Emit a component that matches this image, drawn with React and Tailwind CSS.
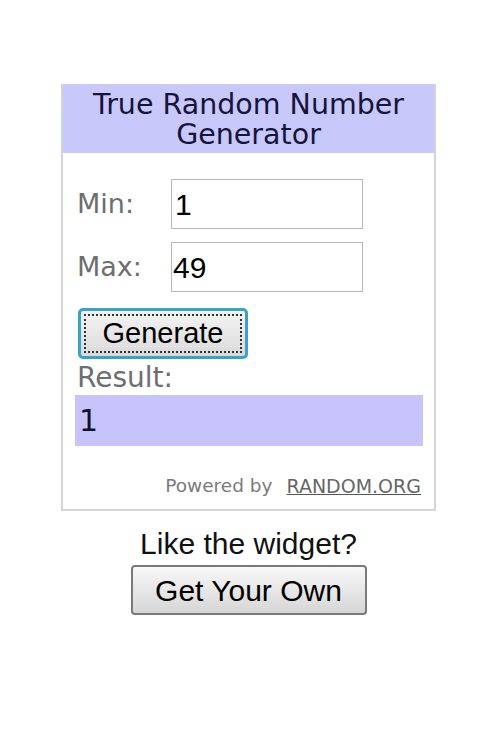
export default function App() {
  return (
    <div className="w-[503px] h-[750px] bg-white pt-[84px]">
      <div className="w-[375px] ml-[61px] flex flex-col items-center">
        <div className="w-[375px] border-2 border-[#d4d4dc] border-t-0 bg-white flex flex-col">
          <div className="bg-[#c8c8fb] h-[69px] flex flex-col items-center pt-[6px] text-[#14143c] text-[28.5px] leading-[30px] font-['DejaVu_Sans',sans-serif]">
            <div>True Random Number</div>
            <div>Generator</div>
          </div>
          <div className="flex flex-col pl-[14px] pr-[10px] pt-[26px] font-['DejaVu_Sans',sans-serif]">
            <div className="flex items-center h-[50px]">
              <span className="w-[94px] text-[27px] text-[#6e6e6e] leading-[32px]">Min:</span>
              <div className="w-[192px] h-[50px] border border-[#b8b8b8] bg-white flex items-center pl-[3px] text-[30px] text-black font-['Liberation_Sans',sans-serif]">1</div>
            </div>
            <div className="flex items-center h-[50px] mt-[13px]">
              <span className="w-[94px] text-[27px] text-[#6e6e6e] leading-[32px]">Max:</span>
              <div className="w-[192px] h-[50px] border border-[#b8b8b8] bg-white flex items-center pl-[1px] text-[30px] text-black font-['Liberation_Sans',sans-serif]">49</div>
            </div>
            <div className="mt-[16px]">
              <div className="w-[170px] h-[51px] ml-[1px] rounded-[5px] border-[3px] border-[#3aa2c8] bg-gradient-to-b from-[#f4f4f4] to-[#dadada] p-[3px]">
                <div className="w-full h-full border-2 border-dotted border-[#333] flex items-center justify-center text-[29px] text-black font-['Liberation_Sans',sans-serif]">Generate</div>
              </div>
            </div>
            <div className="text-[28px] text-[#6e6e6e] leading-[28px] mt-[5px]">Result:</div>
            <div className="h-[51px] bg-[#c6c4fa] flex items-center pl-[4px] mt-[3px] ml-[-2px] mr-[1px] text-[30px] text-[#101030]">1</div>
            <div className="flex justify-end items-center mt-[29px] mb-[12px] mr-[3px] leading-[22px] text-[#7a7a7a] gap-[14px]">
              <span className="text-[18.5px]">Powered by</span>
              <span className="text-[19px] underline decoration-[#555] text-[#666]">RANDOM.ORG</span>
            </div>
          </div>
        </div>
        <div className="mt-[16px] text-[30px] text-[#111] font-['Liberation_Sans',sans-serif] leading-[34px]">Like the widget?</div>
        <div className="mt-[4px] w-[236px] h-[50px] rounded-[4px] border-2 border-[#7a7a7a] bg-gradient-to-b from-[#f8f8f8] to-[#d6d6d6] flex items-center justify-center text-[30px] text-black font-['Liberation_Sans',sans-serif]">Get Your Own</div>
      </div>
    </div>
  );
}
